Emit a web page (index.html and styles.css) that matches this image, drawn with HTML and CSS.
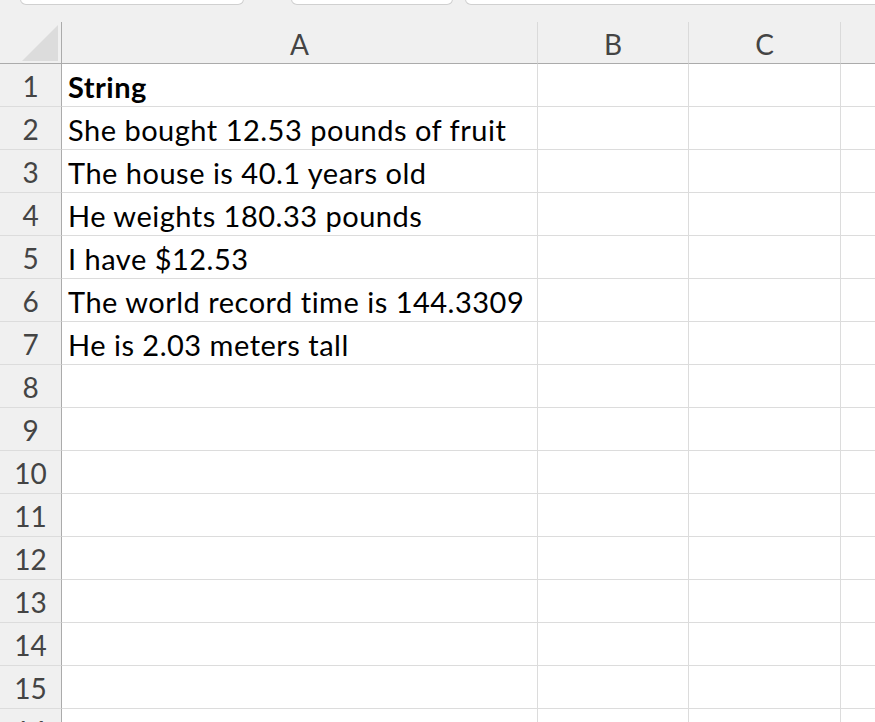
FILE: index.html
```html
<!DOCTYPE html>
<html>
<head>
<meta charset="utf-8">
<link rel="stylesheet" href="styles.css">
</head>
<body>
<div class="topbar">
  <div class="tab tab1"></div>
  <div class="tab tab2"></div>
  <div class="tab tab3"></div>
</div>
<div class="sheet">
  <div class="corner hdr"><svg width="36" height="36" viewBox="0 0 36 36"><polygon points="36,0 36,36 0,36" fill="#dcdcdc"/></svg></div>
  <div class="colhdr hdr">A</div>
  <div class="colhdr hdr">B</div>
  <div class="colhdr hdr">C</div>
  <div class="colhdr hdr last"></div>

  <div class="rowhdr">1</div><div class="cell bold">String</div><div class="cell"></div><div class="cell"></div><div class="cell last"></div>
  <div class="rowhdr">2</div><div class="cell">She bought 12.53 pounds of fruit</div><div class="cell"></div><div class="cell"></div><div class="cell last"></div>
  <div class="rowhdr">3</div><div class="cell">The house is 40.1 years old</div><div class="cell"></div><div class="cell"></div><div class="cell last"></div>
  <div class="rowhdr">4</div><div class="cell">He weights 180.33 pounds</div><div class="cell"></div><div class="cell"></div><div class="cell last"></div>
  <div class="rowhdr">5</div><div class="cell">I have $12.53</div><div class="cell"></div><div class="cell"></div><div class="cell last"></div>
  <div class="rowhdr">6</div><div class="cell">The world record time is 144.3309</div><div class="cell"></div><div class="cell"></div><div class="cell last"></div>
  <div class="rowhdr">7</div><div class="cell">He is 2.03 meters tall</div><div class="cell"></div><div class="cell"></div><div class="cell last"></div>
  <div class="rowhdr">8</div><div class="cell"></div><div class="cell"></div><div class="cell"></div><div class="cell last"></div>
  <div class="rowhdr">9</div><div class="cell"></div><div class="cell"></div><div class="cell"></div><div class="cell last"></div>
  <div class="rowhdr">10</div><div class="cell"></div><div class="cell"></div><div class="cell"></div><div class="cell last"></div>
  <div class="rowhdr">11</div><div class="cell"></div><div class="cell"></div><div class="cell"></div><div class="cell last"></div>
  <div class="rowhdr">12</div><div class="cell"></div><div class="cell"></div><div class="cell"></div><div class="cell last"></div>
  <div class="rowhdr">13</div><div class="cell"></div><div class="cell"></div><div class="cell"></div><div class="cell last"></div>
  <div class="rowhdr">14</div><div class="cell"></div><div class="cell"></div><div class="cell"></div><div class="cell last"></div>
  <div class="rowhdr">15</div><div class="cell"></div><div class="cell"></div><div class="cell"></div><div class="cell last"></div>
  <div class="rowhdr">16</div><div class="cell"></div><div class="cell"></div><div class="cell"></div><div class="cell last"></div>
</div>
</body>
</html>
```

FILE: styles.css
```css
* { box-sizing: border-box; }
html, body {
  margin: 0;
  padding: 0;
  background: #ffffff;
  overflow: hidden;
  height: 722px;
}
body {
  font-family: Lato, "Liberation Sans", sans-serif;
}
.topbar {
  height: 22px;
  background: #f0f0f0;
  display: flex;
  align-items: flex-start;
}
.tab {
  height: 6px;
  margin-top: -1px;
  background: #ffffff;
  border: 1px solid #d0d0d0;
  border-radius: 0 0 8px 8px;
}
.tab1 { margin-left: 20px; width: 224px; }
.tab2 { margin-left: 47px; width: 162px; }
.tab3 { margin-left: 12px; flex: 1; margin-right: -12px; }

.sheet {
  display: grid;
  grid-template-columns: 62px 476px 151px 152px 1fr;
  grid-template-rows: 42px;
  grid-auto-rows: 43px;
}
.hdr {
  background: #f0f0f0;
  border-bottom: 1px solid #ababab;
}
.corner {
  border-right: 1px solid #ababab;
  display: flex;
  align-items: flex-end;
  padding-left: 22px;
  padding-bottom: 2px;
}
.corner svg { display: block; }
.colhdr {
  border-right: 1px solid #dadada;
  color: #444444;
  font-size: 28px;
  display: flex;
  align-items: center;
  justify-content: center;
  padding-top: 3px;
}
.colhdr.last, .cell.last { border-right: none; }
.rowhdr {
  background: #f0f0f0;
  border-right: 1px solid #ababab;
  border-bottom: 1px solid #dcdcdc;
  color: #444444;
  font-size: 28px;
  display: flex;
  align-items: center;
  justify-content: center;
  padding-top: 2px;
}
.cell {
  border-right: 1px solid #dcdcdc;
  border-bottom: 1px solid #dcdcdc;
  color: #000000;
  font-size: 29px;
  letter-spacing: 0.5px;
  padding-left: 6px;
  display: flex;
  align-items: center;
  padding-top: 3px;
  white-space: nowrap;
}
.cell.bold { font-weight: 700; }
```
